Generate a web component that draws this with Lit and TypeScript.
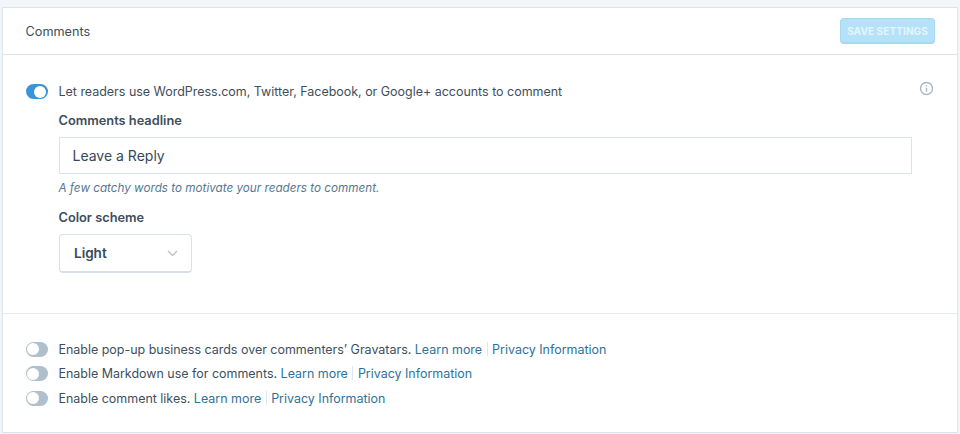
import { LitElement, html, css } from "lit";
import { customElement } from "lit/decorators.js";

@customElement("app-root")
export class AppRoot extends LitElement {
  static styles = css`
    :host { display: block; width: 960px; height: 434px; background: #f3f6f8; overflow: hidden; box-sizing: border-box; padding: 8px 3px 0; font-family: Inter, "Noto Sans", sans-serif; color: #3d4e5c; font-size: 12.46px; }
    .card { background: #fff; box-shadow: 0 0 0 1px #dde5ec; height: 424px; display: flex; flex-direction: column; }
    .head { height: 47px; box-sizing: border-box; border-bottom: 1px solid #dde5ec; display: flex; align-items: center; justify-content: space-between; padding: 0 22px 0 22.5px; flex: none; }
    .title { font-size: 12.7px; }
    .save { width: 95px; height: 26px; box-sizing: border-box; background: #b5e2f8; border: 1px solid #a6d8f1; border-bottom-width: 2px; border-radius: 4px; color: #e3f5fd; font: 700 10px/1 Inter, sans-serif; letter-spacing: .1px; display: flex; align-items: center; justify-content: center; white-space: nowrap; padding-top: 1px; }
    .main { height: 259px; flex: none; box-sizing: border-box; border-bottom: 1px solid #e4eaef; padding: 27.5px 45px 0 22.5px; position: relative; }
    .row { display: flex; align-items: center; gap: 11px; height: 18px; }
    .info { position: absolute; right: 23px; top: 26px; width: 15px; height: 15px; }
    .toggle { width: 22px; height: 15px; border-radius: 8px; background: #b0bfcc; position: relative; flex: none; }
    .toggle::after { content: ""; position: absolute; left: 1.5px; top: 1.5px; width: 12px; height: 12px; border-radius: 50%; background: #fff; }
    .toggle.on { background: #3a94d6; }
    .toggle.on::after { left: 8.5px; }
    .fields { margin-left: 33px; }
    label { display: block; font-weight: 600; font-size: 12.8px; line-height: 16px; }
    .l1 { margin-top: 12.5px; }
    .input { margin-top: 8px; height: 37px; box-sizing: border-box; border: 1px solid #dbe3ea; display: flex; align-items: center; padding-left: 13px; font-size: 14px; color: #37495a; }
    .hint { margin-top: 7px; font-style: italic; font-size: 11.7px; line-height: 15px; color: #55778f; }
    .l2 { margin-top: 14px; }
    .select { margin-top: 8px; width: 133px; height: 39px; box-sizing: border-box; border: 1px solid #d9e1e8; border-bottom-width: 2px; border-radius: 4px; display: flex; align-items: center; justify-content: space-between; padding: 0 13px 0 14.5px; font-weight: 600; font-size: 13.5px; color: #37495a; }
    .select svg { width: 11px; height: 7px; }
    .list { padding: 26px 0 0 22.5px; display: flex; flex-direction: column; gap: 6.6px; }
    a { color: #2e7198; text-decoration: none; }
    .sep { display: inline-block; width: 1px; height: 14px; background: #e0e6ea; margin: 0 4.5px; vertical-align: -2px; }
    .text { white-space: nowrap; }
  `;

  private opt(text: string) {
    return html`<div class="row"><span class="toggle"></span><span class="text">${text} <a>Learn more</a><span class="sep"></span><a>Privacy Information</a></span></div>`;
  }

  render() {
    return html`<div class="card">
      <div class="head"><span class="title">Comments</span><span class="save">SAVE SETTINGS</span></div>
      <div class="main">
        <div class="row"><span class="toggle on"></span><span class="text">Let readers use WordPress.com, Twitter, Facebook, or Google+ accounts to comment</span></div>
        <svg class="info" viewBox="0 0 15 15" fill="none" stroke="#aab6c0" stroke-width="1.4"><circle cx="7.5" cy="7.5" r="6"/><path d="M7.5 6.8v4M7.5 4.2v1.4"/></svg>
        <div class="fields">
          <label class="l1">Comments headline</label>
          <div class="input">Leave a Reply</div>
          <div class="hint">A few catchy words to motivate your readers to comment.</div>
          <label class="l2">Color scheme</label>
          <div class="select">Light<svg viewBox="0 0 11 7" fill="none" stroke="#b4bfc8" stroke-width="1.2"><path d="M1 1l4.5 4.5L10 1"/></svg></div>
        </div>
      </div>
      <div class="list">
        ${this.opt("Enable pop-up business cards over commenters’ Gravatars.")}
        ${this.opt("Enable Markdown use for comments.")}
        ${this.opt("Enable comment likes.")}
      </div>
    </div>`;
  }
}
